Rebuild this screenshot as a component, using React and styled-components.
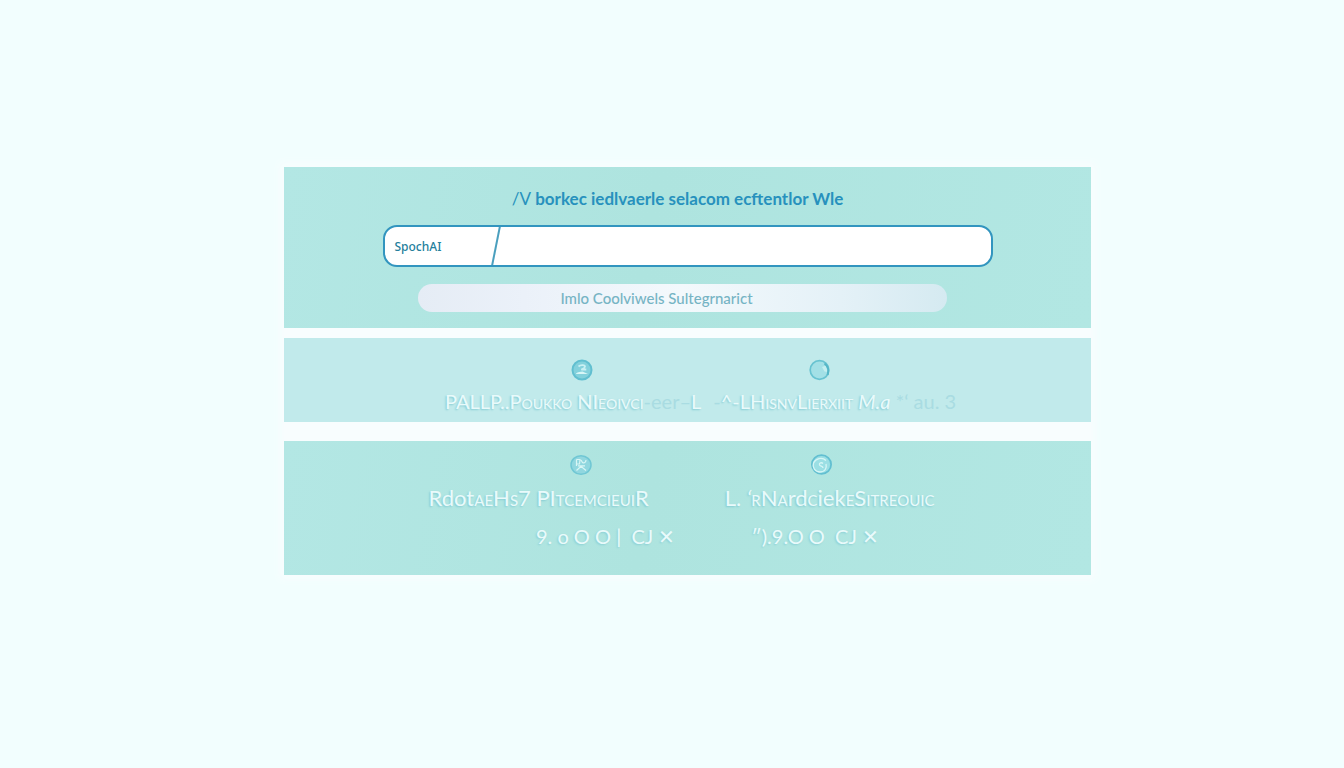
import React, { useState } from 'react';
import styled, { createGlobalStyle } from 'styled-components';

const GlobalStyle = createGlobalStyle`
  * {
    box-sizing: border-box;
  }

  body {
    margin: 0;
    background: #f2fefe;
    font-family: Lato, 'Noto Sans', sans-serif;
  }
`;

const Page = styled.main`
  display: flex;
  flex-direction: column;
  min-height: 100vh;
  padding: 167px 253px 40px 284px;
`;

const Stack = styled.div`
  display: flex;
  flex-direction: column;
  background: #f8fdfe;
  box-shadow: 0 0 8px 4px #f8fdfe;
`;

const Panel = styled.section`
  display: flex;
  flex-direction: column;
  align-items: center;
  background: ${(props) => (props.$pale ? '#c1eaeb' : 'linear-gradient(100deg, #b3e7e4 0%, #aee4df 45%, #b2e7e3 100%)')};
  padding: ${(props) => props.$padding};
  margin-top: ${(props) => props.$gap || '0'};
`;

// Search
const Heading = styled.h1`
  margin: 0 20px 15px 0;
  color: #2791bd;
  font-size: 17px;
  line-height: 22px;
  font-weight: 700;
`;

const HeadingLight = styled.span`
  font-weight: 400;
`;

const SearchForm = styled.form`
  display: flex;
  flex-direction: column;
  align-items: center;
  width: 100%;
`;

const SearchBox = styled.div`
  display: flex;
  align-items: stretch;
  width: 100%;
  max-width: 610px;
  height: 42px;
  background: #ffffff;
  border: 2px solid #3295bf;
  border-radius: 14px;
  overflow: hidden;
`;

const SearchLabel = styled.label`
  width: 105px;
  padding-left: 10px;
  color: #24809c;
  font-family: 'Noto Sans', sans-serif;
  font-size: 12px;
  line-height: 40px;
  font-weight: 500;
`;

const Divider = styled.svg`
  width: 12px;
  height: 38px;
  flex: none;
`;

const SearchInput = styled.input`
  flex: 1;
  min-width: 0;
  padding: 0 12px;
  border: none;
  outline: none;
  background: transparent;
  color: #24809c;
  font-size: 14px;
`;

const SubmitButton = styled.button`
  width: 100%;
  max-width: 529px;
  height: 28px;
  margin: 17px 10px 0 0;
  padding: 0 52px 0 0;
  border: none;
  border-radius: 14px;
  background: linear-gradient(90deg, #e5ecf5 0%, #ebf1f9 20%, #f3f9fc 50%, #e4f1f7 80%, #d5eaf1 100%);
  color: #76b4c4;
  font-family: Lato, sans-serif;
  font-size: 15px;
  font-weight: 500;
  cursor: pointer;
`;

// Stats
const Row = styled.div`
  display: flex;
  justify-content: center;
  gap: ${(props) => props.$gap};
  width: 100%;
  margin-top: ${(props) => props.$top || '0'};
  padding-left: ${(props) => props.$indent || '0'};
  padding-right: ${(props) => props.$outdent || '0'};
  white-space: nowrap;
`;

const Icon = styled.svg`
  width: 22px;
  height: 22px;
  flex: none;
`;

const Name = styled.h2`
  margin: 0;
  color: #e9fafb;
  font-size: ${(props) => (props.$large ? '22px' : '20px')};
  line-height: 28px;
  font-weight: 400;
  text-shadow: -1px 1px 2px #83cbd2;
`;

const Caps = styled.span`
  font-variant: small-caps;
`;

const Faded = styled.span`
  color: #a9dce2;
  text-shadow: none;
`;

const Amount = styled.p`
  margin: 0;
  color: #e9fafb;
  font-size: 20px;
  line-height: 24px;
  text-shadow: -1px 1px 2px #8bd0d5;
`;

const PersonIcon = () => (
  <Icon viewBox="0 0 22 22" fill="none" aria-hidden="true">
    <circle cx="11" cy="11" r="9.5" fill="#83d1dc" stroke="#61bfd0" strokeWidth="2" />
    <path d="M7.5 7.5c2.5-2.2 6.5-1.5 6.5.3 0 1.2-2.2 2-3.7 2.7h5" stroke="#c9f0f3" strokeWidth="1.8" />
    <path d="M5 14.5c2-1.5 4.5-1.8 6.5-2l5.5 2.5H5z" fill="#d8f6f7" />
  </Icon>
);

const DialIcon = () => (
  <Icon viewBox="0 0 22 22" fill="none" aria-hidden="true">
    <circle cx="10.5" cy="11" r="9.3" fill="#a3e0e6" stroke="#68c3d1" strokeWidth="1.7" />
    <path d="M13 8l4-1.5 1.5 6.5-3-.5z" fill="#c4eff0" />
    <path d="M15.5 4.5c3.5 2.5 4.5 6.5 3.2 11.5" stroke="#55b6c7" strokeWidth="2" />
  </Icon>
);

const BadgeIcon = () => (
  <Icon viewBox="0 0 22 22" fill="none" aria-hidden="true">
    <ellipse cx="11" cy="11" rx="10" ry="9.3" fill="#91d7df" stroke="#70c7d4" strokeWidth="1.5" />
    <path d="M6.5 5.5v6.5M6.5 5.5h3.5l-.5 4.5h-2.5M11 6l1.5 2.5c1.5 1 3.5 0 3.5-2.5M6.5 16.5l4.5-4.2 5 4.2M8 11.8h7" stroke="#d9f6f5" strokeWidth="1.2" />
  </Icon>
);

const SpiralIcon = () => (
  <Icon viewBox="0 0 22 22" fill="none" aria-hidden="true">
    <ellipse cx="11.5" cy="10.5" rx="9.6" ry="9.3" fill="#9bdfe4" stroke="#62bfd1" strokeWidth="1.8" />
    <path d="M16 6.5C12 2.5 5.5 4.5 3.5 9c-1.5 4.5 1.5 9 6.5 9s7-4 6-8" stroke="#d7f6f6" strokeWidth="1.3" />
    <path d="M13 9.5c-1.5-1.5-4-.5-3.5 1.3.5 1.7 3.5 1 3.5 3.2" stroke="#d7f6f6" strokeWidth="1.3" />
  </Icon>
);

const App = () => {
  const [query, setQuery] = useState('');

  const handleSubmit = (e) => {
    e.preventDefault();
  };

  return (
    <>
      <GlobalStyle />
      <Page>
        <Stack>
          <Panel $padding="21px 20px 16px">
            <Heading>
              <HeadingLight>/V</HeadingLight> borkec iedlvaerle selacom ecftentlor Wle
            </Heading>
            <SearchForm onSubmit={handleSubmit}>
              <SearchBox>
                <SearchLabel htmlFor="search">SpochAI</SearchLabel>
                <Divider viewBox="0 0 12 38" aria-hidden="true">
                  <path d="M10 -1L2 39" stroke="#4a9fbe" strokeWidth="2" fill="none" />
                </Divider>
                <SearchInput id="search" value={query} onChange={(e) => setQuery(e.target.value)} />
              </SearchBox>
              <SubmitButton type="submit">Imlo Coolviwels Sultegrnarict</SubmitButton>
            </SearchForm>
          </Panel>

          <Panel $pale $gap="10px" $padding="21px 0 7px">
            <Row $gap="216px" $indent="26px">
              <PersonIcon />
              <DialIcon />
            </Row>
            <Row $top="6px" $gap="12px" $indent="26px">
              <Name>
                <Caps>PALLP..Poukko NIeoıvci</Caps>
                <Faded>-eer–</Faded>L
              </Name>
              <Name>
                <Faded>-</Faded>^-<Caps>LHisnvLierxiit</Caps> <i>M.a</i>
                <Faded> *‘ au. 3</Faded>
              </Name>
            </Row>
          </Panel>

          <Panel $gap="19px" $padding="13px 0 27px">
            <Row $gap="218px" $indent="26px">
              <BadgeIcon />
              <SpiralIcon />
            </Row>
            <Row $top="8px" $gap="76px" $outdent="12px">
              <Name $large>
                Rdot<Caps>aeHs7 PItcemcieuiR</Caps>
              </Name>
              <Name $large>
                L. <i>‘</i><Caps>rNa</Caps>rd<Caps>c</Caps>iek<Caps>eSitreouic</Caps>
              </Name>
            </Row>
            <Row $top="12px" $gap="76px" $indent="40px">
              <Amount>9. o O O | &nbsp;CJ ✕</Amount>
              <Amount>″).9.O O &nbsp;CJ ✕</Amount>
            </Row>
          </Panel>
        </Stack>
      </Page>
    </>
  );
};

export default App;
